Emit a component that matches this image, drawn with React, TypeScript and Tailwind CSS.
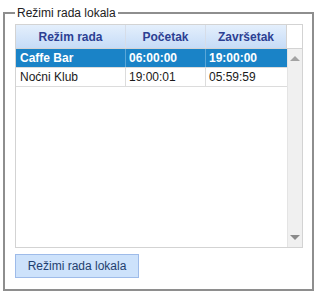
import React from "react";

const rows = [
  { a: "Caffe Bar", b: "06:00:00", c: "19:00:00", sel: true },
  { a: "Noćni Klub", b: "19:00:01", c: "05:59:59", sel: false },
];

export default function App() {
  return (
    <div className="w-[320px] h-[297px] bg-white pl-[3px] pt-[6px]" style={{ fontFamily: '"Liberation Sans", Arial, sans-serif' }}>
      <fieldset className="w-[311px] h-[285px] border-2 border-[#8e8e8e] pl-[10px] pr-[8px] m-0">
        <legend className="px-[2px] text-[12px] leading-[14px] text-[#222]">Režimi rada lokala</legend>
        <div className="mt-[4px] w-[288px] h-[224px] border border-[#d3d3d3] flex flex-col">
          <div className="flex h-[23px] shrink-0">
            <div className="w-[110px] flex items-center justify-center text-[12px] font-bold text-[#2c3f93] bg-gradient-to-b from-[#e4effc] to-[#c6dcf7] border-r border-[#d6dde8]">Režim rada</div>
            <div className="w-[80px] flex items-center justify-center text-[12px] font-bold text-[#2c3f93] bg-gradient-to-b from-[#e4effc] to-[#c6dcf7] border-r border-[#d6dde8]">Početak</div>
            <div className="w-[81px] flex items-center justify-center text-[12px] font-bold text-[#2c3f93] bg-gradient-to-b from-[#e4effc] to-[#c6dcf7] border-r border-[#d3d3d3]">Završetak</div>
            <div className="flex-1 bg-white" />
          </div>
          <div className="flex flex-1 border-t border-[#d3d3d3]">
            <div className="w-[271px] flex flex-col">
              {rows.map((r, i) => (
                <div key={i} className={`flex h-[19px] border-b border-[#dcdcdc] text-[12px] ${r.sel ? "bg-[#1a83c7] text-white font-bold" : "bg-white text-[#1a1a1a]"}`}>
                  <div className={`w-[110px] pl-[4px] flex items-center border-r ${r.sel ? "border-[#5aa7d8]" : "border-[#dcdcdc]"}`}>{r.a}</div>
                  <div className={`w-[80px] pl-[3px] flex items-center border-r ${r.sel ? "border-[#5aa7d8]" : "border-[#dcdcdc]"}`}>{r.b}</div>
                  <div className="w-[81px] pl-[3px] flex items-center">{r.c}</div>
                </div>
              ))}
            </div>
            <div className="flex-1 bg-[#f0f0f0] border-l border-[#e4e4e4] flex flex-col items-center justify-between py-[7px]">
              <div className="w-0 h-0 border-l-[5px] border-r-[5px] border-b-[5px] border-l-transparent border-r-transparent border-b-[#a3a3a3]" />
              <div className="w-0 h-0 border-l-[5px] border-r-[5px] border-t-[5px] border-l-transparent border-r-transparent border-t-[#8a8a8a]" />
            </div>
          </div>
        </div>
        <button className="mt-[6px] w-[124px] h-[24px] bg-[#cde2fb] border border-[#9ebbe9] text-[12px] text-[#1f3f6f] flex items-center justify-center">Režimi rada lokala</button>
      </fieldset>
    </div>
  );
}
